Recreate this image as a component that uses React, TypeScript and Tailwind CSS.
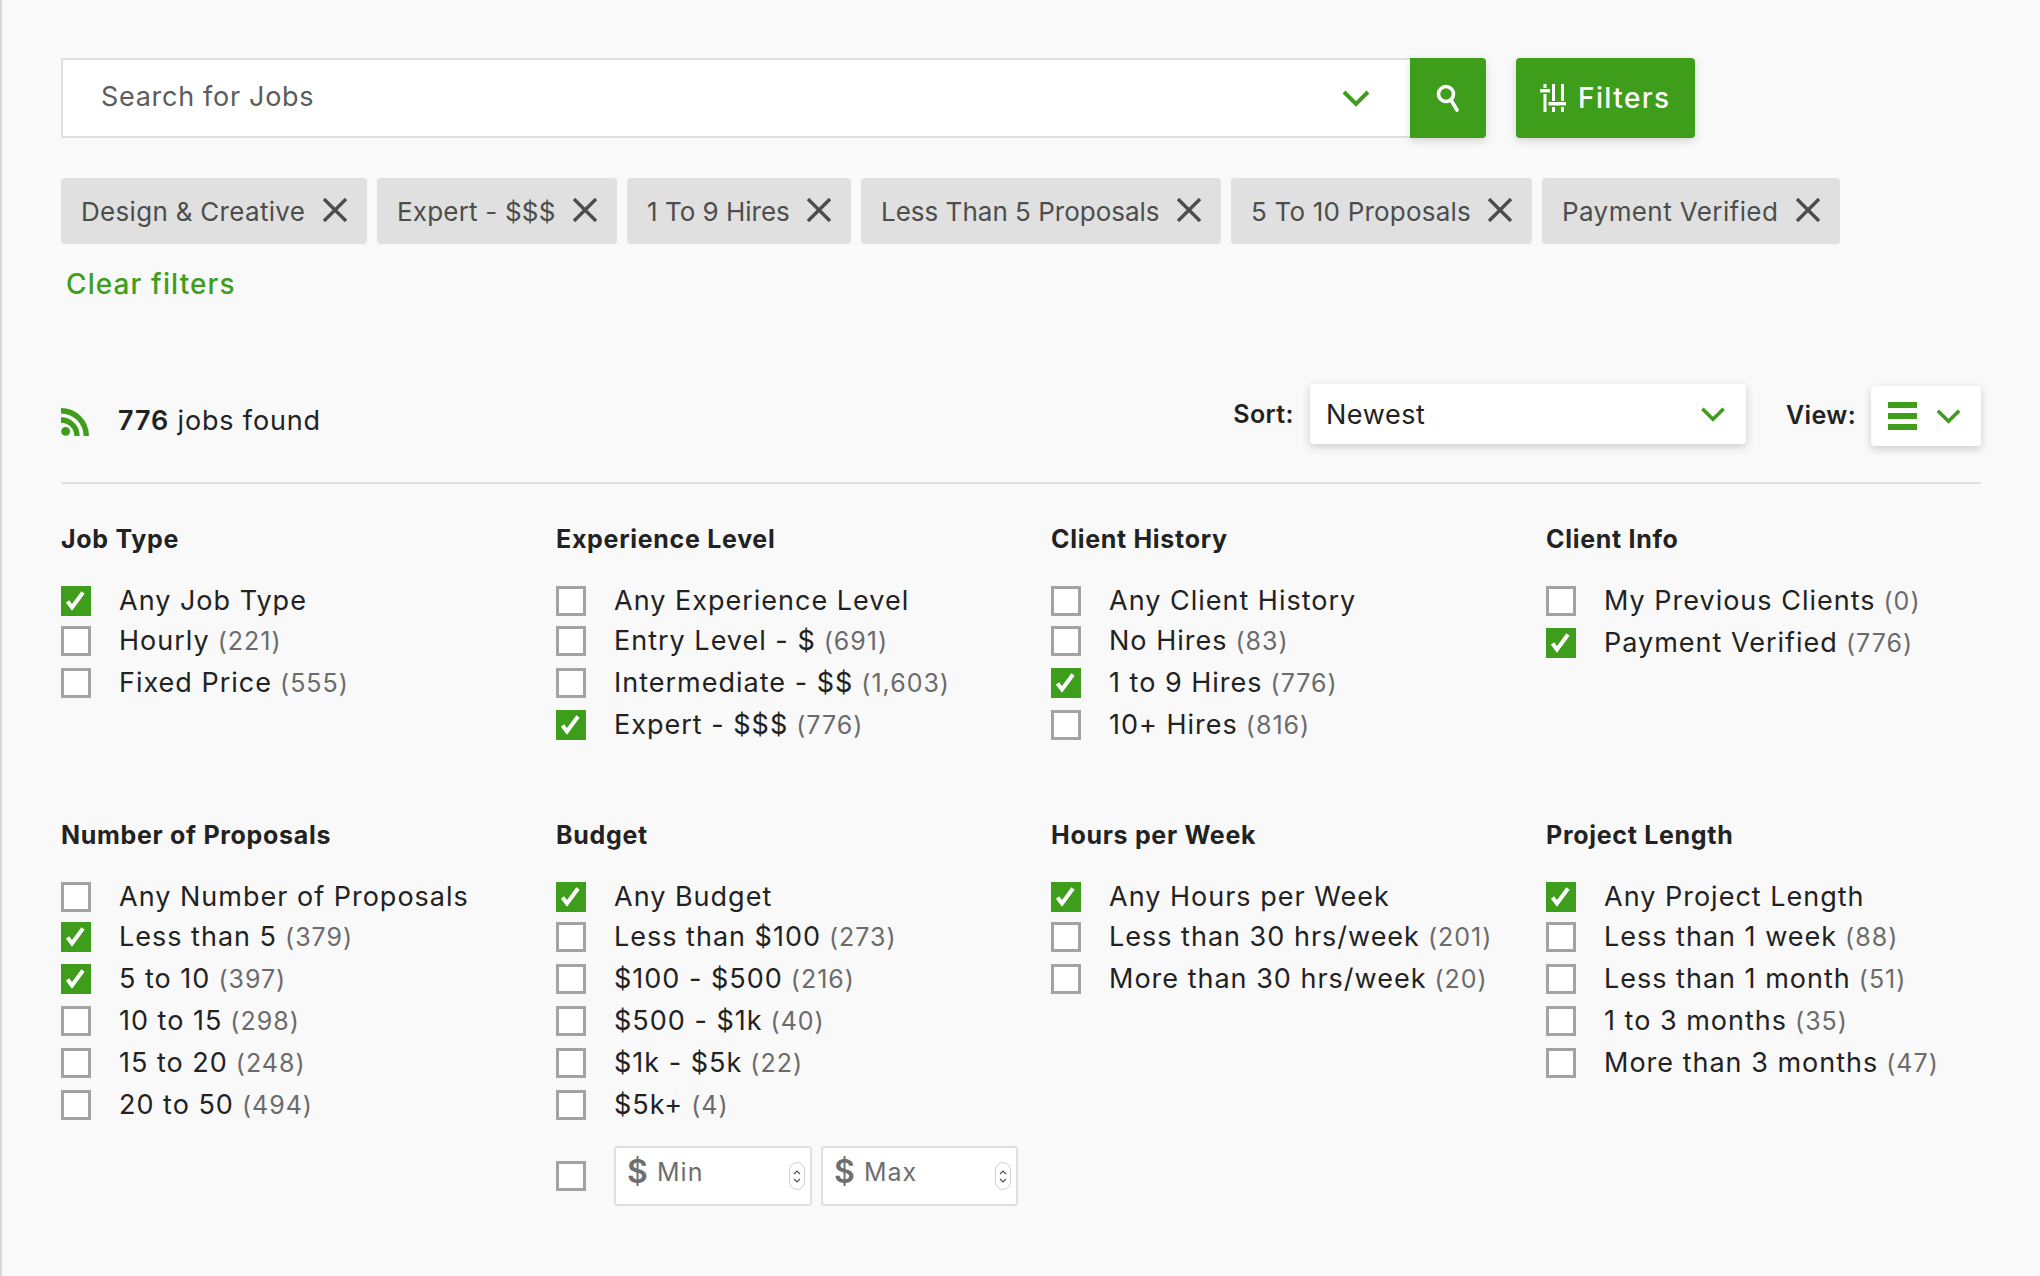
const chips = [
  { label: "Design & Creative", width: "w-[306px]", tracking: "tracking-[0.3px]" },
  { label: "Expert - $$$", width: "w-[240px]", tracking: "tracking-[0.2px]" },
  { label: "1 To 9 Hires", width: "w-[224px]", tracking: "tracking-[0px]" },
  { label: "Less Than 5 Proposals", width: "w-[360px]", tracking: "tracking-[0px]" },
  { label: "5 To 10 Proposals", width: "w-[301px]", tracking: "tracking-[0.2px]" },
  { label: "Payment Verified", width: "w-[298px]", tracking: "tracking-[0.4px]" },
];

type Option = { label: string; count?: string; checked?: boolean };
type Group = { title: string; even?: boolean; custom?: boolean; options: Option[] };

const groups: Group[] = [
  {
    title: "Job Type",
    options: [
      { label: "Any Job Type", checked: true },
      { label: "Hourly", count: "(221)" },
      { label: "Fixed Price", count: "(555)" },
    ],
  },
  {
    title: "Experience Level",
    options: [
      { label: "Any Experience Level" },
      { label: "Entry Level - $", count: "(691)" },
      { label: "Intermediate - $$", count: "(1,603)" },
      { label: "Expert - $$$", count: "(776)", checked: true },
    ],
  },
  {
    title: "Client History",
    options: [
      { label: "Any Client History" },
      { label: "No Hires", count: "(83)" },
      { label: "1 to 9 Hires", count: "(776)", checked: true },
      { label: "10+ Hires", count: "(816)" },
    ],
  },
  {
    title: "Client Info",
    even: true,
    options: [
      { label: "My Previous Clients", count: "(0)" },
      { label: "Payment Verified", count: "(776)", checked: true },
    ],
  },
  {
    title: "Number of Proposals",
    options: [
      { label: "Any Number of Proposals" },
      { label: "Less than 5", count: "(379)", checked: true },
      { label: "5 to 10", count: "(397)", checked: true },
      { label: "10 to 15", count: "(298)" },
      { label: "15 to 20", count: "(248)" },
      { label: "20 to 50", count: "(494)" },
    ],
  },
  {
    title: "Budget",
    custom: true,
    options: [
      { label: "Any Budget", checked: true },
      { label: "Less than $100", count: "(273)" },
      { label: "$100 - $500", count: "(216)" },
      { label: "$500 - $1k", count: "(40)" },
      { label: "$1k - $5k", count: "(22)" },
      { label: "$5k+", count: "(4)" },
    ],
  },
  {
    title: "Hours per Week",
    options: [
      { label: "Any Hours per Week", checked: true },
      { label: "Less than 30 hrs/week", count: "(201)" },
      { label: "More than 30 hrs/week", count: "(20)" },
    ],
  },
  {
    title: "Project Length",
    options: [
      { label: "Any Project Length", checked: true },
      { label: "Less than 1 week", count: "(88)" },
      { label: "Less than 1 month", count: "(51)" },
      { label: "1 to 3 months", count: "(35)" },
      { label: "More than 3 months", count: "(47)" },
    ],
  },
];

function Chevron({ className }: { className: string }) {
  return (
    <svg viewBox="0 0 28 18" fill="none" stroke="#3e9e1c" strokeWidth="4" className={className}>
      <path d="M2 3l12 12L26 3" />
    </svg>
  );
}

function Checkbox({ checked }: { checked?: boolean }) {
  if (checked) {
    return (
      <span className="flex h-[30px] w-[30px] shrink-0 items-center justify-center bg-[#3e9e1c]">
        <svg viewBox="0 0 30 30" fill="none" stroke="#fff" strokeWidth="4" className="h-[30px] w-[30px]">
          <path d="M6.5 15.5l4.5 6L22 6.5" />
        </svg>
      </span>
    );
  }
  return <span className="h-[30px] w-[30px] shrink-0 border-[3px] border-[#a3a3a3] bg-white" />;
}

function MoneyInput({ label, width }: { label: string; width: string }) {
  return (
    <div className={`relative flex h-[60px] items-start rounded-[3px] border-2 border-[#e0e0e0] bg-white pl-[11px] pt-[5px] text-[#6e6e6e] ${width}`}>
      <span className="w-[30px] text-[32px] leading-[38px] font-semibold">$</span>
      <span className="text-[25px] leading-[38px] tracking-[1px]">{label}</span>
      <span className="absolute right-[5px] top-[14px] flex h-[28px] w-[16px] flex-col items-center justify-center gap-[3px] rounded-full border border-[#cfcfcf] bg-white">
        <svg viewBox="0 0 8 5" fill="none" stroke="#555" strokeWidth="1.2" className="h-[5px] w-[8px]">
          <path d="M1 4l3-3 3 3" />
        </svg>
        <svg viewBox="0 0 8 5" fill="none" stroke="#555" strokeWidth="1.2" className="h-[5px] w-[8px]">
          <path d="M1 1l3 3 3-3" />
        </svg>
      </span>
    </div>
  );
}

export default function App() {
  return (
    <div className="min-h-[1276px] border-l-2 border-[#d8d8d8] bg-[#f9f9f9] pb-[70px] pl-[59px] pr-[59px] pt-[58px] font-['Inter',sans-serif] text-[27px] text-[#222]">
      <div className="flex h-[80px]">
        <div className="flex w-[1349px] items-center justify-between border-2 border-[#e0e0e0] border-r-0 bg-white pl-[38px] pr-[39px]">
          <span className="mb-[2px] text-[27px] tracking-[0.7px] text-[#5c5c5c]">Search for Jobs</span>
          <Chevron className="h-[18px] w-[30px]" />
        </div>
        <button className="flex w-[76px] items-center justify-center rounded-r-[4px] bg-[#3e9e1c] shadow-[0_3px_8px_rgba(0,0,0,0.15)]">
          <svg viewBox="0 0 24 28" fill="none" stroke="#fff" className="h-[28px] w-[24px]">
            <circle cx="10" cy="10" r="7.5" strokeWidth="3.6" />
            <path d="M15 16l6 10" strokeWidth="3.6" strokeLinecap="round" />
          </svg>
        </button>
        <button className="ml-[30px] flex w-[179px] items-center gap-[12px] rounded-[4px] bg-[#3e9e1c] pl-[24px] text-[28px] font-medium tracking-[1.4px] text-white shadow-[0_3px_8px_rgba(0,0,0,0.15)]">
          <svg viewBox="0 0 26 28" fill="#fff" className="h-[28px] w-[26px]">
            <rect x="3.5" y="0" width="3" height="4" />
            <rect x="0" y="5" width="10" height="3.4" />
            <rect x="3.5" y="10" width="3" height="18" />
            <rect x="12" y="0" width="3" height="17" />
            <rect x="8.5" y="18" width="10" height="3.4" />
            <rect x="12" y="23" width="3" height="5" />
            <rect x="21" y="0" width="3" height="17" />
            <rect x="17" y="18" width="9" height="3.4" />
            <rect x="21" y="23" width="3" height="5" />
          </svg>
          Filters
        </button>
      </div>

      <div className="mt-[40px] flex gap-[10px]">
        {chips.map((chip) => (
          <div
            key={chip.label}
            className={`flex h-[66px] items-center justify-between rounded-[4px] bg-[#e0e0e0] pl-[20px] pr-[20px] text-[#4d4d4d] ${chip.width}`}
          >
            <span className={`whitespace-nowrap text-[26px] ${chip.tracking}`}>{chip.label}</span>
            <svg viewBox="0 0 24 24" fill="none" stroke="#4d4d4d" strokeWidth="3.4" className="mb-[2px] h-[24px] w-[24px] shrink-0">
              <path d="M1 1l22 22M23 1L1 23" />
            </svg>
          </div>
        ))}
      </div>

      <div className="ml-[5px] mt-[20px] text-[28px] font-medium leading-[40px] tracking-[1.1px] text-[#3e9e1c]">Clear filters</div>

      <div className="mt-[80px] flex h-[100px] items-start justify-between border-b-2 border-[#e0e0e0]">
        <div className="mt-[20px] flex items-start gap-[29px]">
          <svg viewBox="0 0 28 28" fill="none" stroke="#3e9e1c" strokeWidth="5.4" className="mt-[4px] h-[28px] w-[28px]">
            <path d="M0 2.7A25.3 25.3 0 0 1 25.3 28" />
            <path d="M0 12A16 16 0 0 1 16 28" />
            <circle cx="4.6" cy="23.4" r="4.4" fill="#3e9e1c" stroke="none" />
          </svg>
          <span className="text-[27px] leading-[34px] tracking-[0.85px]">
            <span className="font-semibold">776</span> jobs found
          </span>
        </div>
        <div className="flex items-start">
          <span className="mt-[13px] text-[25px] font-semibold leading-[34px] tracking-[0.4px]">Sort:</span>
          <div className="ml-[16px] flex h-[60px] w-[436px] items-center justify-between rounded-[4px] bg-white pl-[16px] pr-[20px] shadow-[0_3px_8px_rgba(0,0,0,0.18)]">
            <span className="pt-[2px] text-[27px] tracking-[0.6px]">Newest</span>
            <Chevron className="h-[16px] w-[26px]" />
          </div>
          <span className="ml-[40px] mt-[14px] text-[25px] font-semibold leading-[34px] tracking-[0.4px]">View:</span>
          <div className="ml-[15px] mt-[2px] flex h-[60px] w-[110px] items-center gap-[19px] rounded-[4px] bg-white pl-[17px] shadow-[0_3px_8px_rgba(0,0,0,0.18)]">
            <span className="flex w-[29px] flex-col gap-[5px]">
              <span className="h-[6px] bg-[#3e9e1c]" />
              <span className="h-[6px] bg-[#3e9e1c]" />
              <span className="h-[6px] bg-[#3e9e1c]" />
            </span>
            <Chevron className="h-[16px] w-[25px]" />
          </div>
        </div>
      </div>

      <div className="mt-[39px] grid grid-cols-[repeat(4,495px)] gap-y-[79px]">
        {groups.map((group) => (
          <div key={group.title}>
            <h3 className="text-[25px] font-bold leading-[32px] tracking-[0.7px]">{group.title}</h3>
            <ul className="mt-[31px] flex flex-col gap-[12px]">
              {group.options.map((option, index) => (
                <li
                  key={option.label}
                  className={`flex h-[30px] items-center gap-[28px] whitespace-nowrap tracking-[1px] ${index === 0 && !group.even ? "mb-[-2px]" : ""}`}
                >
                  <Checkbox checked={option.checked} />
                  <span>
                    {option.label}
                    {option.count && <span className="ml-[8px] text-[25px] text-[#6b6b6b]">{option.count}</span>}
                  </span>
                </li>
              ))}
              {group.custom && (
                <li className="mt-[14px] flex h-[60px] items-center">
                  <Checkbox />
                  <div className="ml-[28px] flex gap-[9px]">
                    <MoneyInput label="Min" width="w-[198px]" />
                    <MoneyInput label="Max" width="w-[197px]" />
                  </div>
                </li>
              )}
            </ul>
          </div>
        ))}
      </div>
    </div>
  );
}
